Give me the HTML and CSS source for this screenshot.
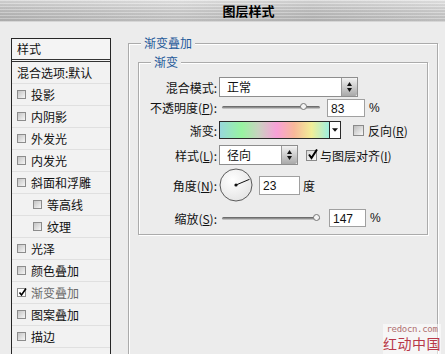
FILE: index.html
```html
<!DOCTYPE html>
<html lang="zh-CN">
<head>
    <meta charset="UTF-8">
    <title>图层样式</title>
    <link rel="stylesheet" href="styles.css">
</head>
<body>
    <!-- Title bar -->
    <div class="titlebar">图层样式</div>

    <div class="main">
        <!-- Style list -->
        <div class="style-list">
            <div class="list-head">样式</div>
            <div class="list-item">混合选项:默认</div>
            <div class="list-item"><span class="cb"></span>投影</div>
            <div class="list-item"><span class="cb"></span>内阴影</div>
            <div class="list-item"><span class="cb"></span>外发光</div>
            <div class="list-item"><span class="cb"></span>内发光</div>
            <div class="list-item"><span class="cb"></span>斜面和浮雕</div>
            <div class="list-item sub"><span class="cb"></span>等高线</div>
            <div class="list-item sub"><span class="cb"></span>纹理</div>
            <div class="list-item"><span class="cb"></span>光泽</div>
            <div class="list-item"><span class="cb"></span>颜色叠加</div>
            <div class="list-item active"><span class="cb checked"><svg viewBox="0 0 9 9"><path d="M1.5 4.5 L3.5 7 L8 0.5" fill="none" stroke="#000" stroke-width="1.6"/></svg></span>渐变叠加</div>
            <div class="list-item"><span class="cb"></span>图案叠加</div>
            <div class="list-item"><span class="cb"></span>描边</div>
            <div class="list-item"></div>
        </div>

        <!-- Gradient overlay settings -->
        <fieldset class="group outer">
            <legend>渐变叠加</legend>
            <fieldset class="group inner">
                <legend>渐变</legend>
                <div class="form-grid">
                    <label>混合模式:</label>
                    <div class="ctl">
                        <div class="select wide"><span class="sel-text">正常</span><span class="sel-btn"><svg viewBox="0 0 7 12"><path d="M3.5 1 L6 5 L1 5 Z M1 7 L6 7 L3.5 11 Z" fill="#111"/></svg></span></div>
                    </div>

                    <label>不透明度(<u>P</u>):</label>
                    <div class="ctl">
                        <div class="slider"><span class="thumb" style="left: 81px"></span></div>
                        <span class="num n1">83</span>
                        <span class="unit">%</span>
                    </div>

                    <label>渐变:</label>
                    <div class="ctl">
                        <div class="grad"><span class="grad-fill"></span><span class="grad-arrow"><svg viewBox="0 0 7 4"><path d="M0 0 L7 0 L3.5 4 Z" fill="#111"/></svg></span></div>
                        <span class="cb big"></span>
                        <span class="cb-label">反向(<u>R</u>)</span>
                    </div>

                    <label>样式(<u>L</u>):</label>
                    <div class="ctl">
                        <div class="select narrow"><span class="sel-text">径向</span><span class="sel-btn"><svg viewBox="0 0 7 12"><path d="M3.5 1 L6 5 L1 5 Z M1 7 L6 7 L3.5 11 Z" fill="#111"/></svg></span></div>
                        <span class="cb big checked2"><svg viewBox="0 0 11 11"><path d="M2 5.5 L4.5 9 L10 0.5" fill="none" stroke="#000" stroke-width="2"/></svg></span>
                        <span class="cb-label">与图层对齐(<u>I</u>)</span>
                    </div>

                    <label>角度(<u>N</u>):</label>
                    <div class="ctl">
                        <svg class="dial" viewBox="0 0 34 34">
                            <defs>
                                <radialGradient id="dialbg" cx="40%" cy="35%" r="70%">
                                    <stop offset="0" stop-color="#ffffff"/>
                                    <stop offset="1" stop-color="#e4e4e4"/>
                                </radialGradient>
                            </defs>
                            <circle cx="17" cy="17" r="16" fill="url(#dialbg)" stroke="#5a5a5a" stroke-width="1"/>
                            <line x1="17" y1="17" x2="30.5" y2="11.3" stroke="#111" stroke-width="1"/>
                            <circle cx="17" cy="17" r="1.6" fill="#111"/>
                        </svg>
                        <span class="num n2">23</span>
                        <span class="unit">度</span>
                    </div>

                    <label>缩放(<u>S</u>):</label>
                    <div class="ctl">
                        <div class="slider"><span class="thumb" style="left: 94px"></span></div>
                        <span class="num n3">147</span>
                        <span class="unit">%</span>
                    </div>
                </div>
            </fieldset>
        </fieldset>
    </div>

    <!-- Watermark -->
    <div class="watermark">
        <div class="wm-url">redocn.com</div>
        <div class="wm-name">红动中国</div>
    </div>
</body>
</html>
```

FILE: styles.css
```css
body {
    margin: 0;
    width: 445px;
    height: 354px;
    overflow: hidden;
    position: relative;
    background: #ececec;
    font-family: "Noto Sans CJK SC", "Liberation Sans", sans-serif;
    font-size: 12px;
    color: #111;
}

/* Title bar */
.titlebar {
    height: 22px;
    line-height: 22px;
    padding-left: 52px;
    text-align: center;
    font-size: 13px;
    font-weight: bold;
    color: #000;
    background:
        repeating-linear-gradient(180deg, rgba(255,255,255,0.25) 0 1px, rgba(0,0,0,0.04) 1px 3px),
        linear-gradient(90deg, rgba(0,0,0,0.06), rgba(255,255,255,0.1) 40%, rgba(0,0,0,0.05) 70%, rgba(255,255,255,0.1)),
        linear-gradient(180deg, #e4e4e4, #c8c8c8 55%, #bdbdbd);
    border-bottom: 1px solid #d6d6d6;
    box-sizing: border-box;
}

.main {
    display: flex;
    align-items: flex-start;
    padding: 13px 0 0 11px;
    height: 332px;
    box-sizing: border-box;
}

/* Left list */
.style-list {
    width: 100px;
    margin-top: 3px;
    border: 1px solid #262626;
    border-bottom: none;
    box-sizing: border-box;
    background: #f2f2f2;
}

.list-head {
    height: 20px;
    line-height: 20px;
    padding-left: 5px;
    border-bottom: 3px double #333;
    background: #f4f4f4;
}

.list-item {
    height: 21px;
    line-height: 21px;
    padding-left: 5px;
    border-bottom: 1px solid #e0e0e0;
    display: flex;
    align-items: center;
    white-space: nowrap;
}

.list-item.sub {
    padding-left: 21px;
}

.list-item.active {
    color: #6a6a6a;
}

.cb {
    display: inline-block;
    flex: none;
    width: 9px;
    height: 9px;
    margin-right: 5px;
    border: 1px solid #8c8c8c;
    box-sizing: border-box;
    background: linear-gradient(135deg, #c4c4c4, #f6f6f6);
    position: relative;
}

.cb svg {
    position: absolute;
    left: 0;
    top: -1px;
    width: 9px;
    height: 9px;
}

.cb.checked {
    background: #fff;
}

/* Fieldsets */
.group {
    margin: 0;
    border: 1px solid #ababab;
    box-shadow: inset 1px 1px 0 #fff, 1px 1px 0 #fff;
    box-sizing: border-box;
    min-width: 0;
}

.group legend {
    color: #1f5a9a;
    font-size: 12px;
    line-height: 16px;
    padding: 0 3px;
    background: #ececec;
}

.outer {
    width: 310px;
    height: 330px;
    margin-left: 17px;
    padding: 3px 9px 0 9px;
}

.outer > legend {
    margin-left: 3px;
}

.inner {
    width: 290px;
    padding: 7px 0 0 0;
}

.inner > legend {
    margin-left: 12px;
}

.form-grid {
    display: grid;
    grid-template-columns: 78px 1fr;
    grid-template-rows: 20px 21px 24px 26px 34px 32px;
    column-gap: 2px;
}

.form-grid label {
    text-align: right;
    align-self: center;
    white-space: nowrap;
}

.ctl {
    display: flex;
    align-items: center;
}

/* Select */
.select {
    height: 20px;
    display: flex;
    border: 1px solid #8e8e8e;
    box-sizing: border-box;
    background: #fff;
}

.select.wide {
    width: 139px;
}

.select.narrow {
    width: 79px;
}

.sel-text {
    flex: 1;
    padding-left: 7px;
    line-height: 18px;
}

.sel-btn {
    width: 15px;
    border-left: 1px solid #9a9a9a;
    background: linear-gradient(180deg, #f2f2f2, #c6c6c6 60%, #a9a9a9);
    display: flex;
    align-items: center;
    justify-content: center;
    border-radius: 0 2px 2px 0;
}

.sel-btn svg {
    width: 7px;
    height: 12px;
}

/* Slider */
.slider {
    position: relative;
    width: 98px;
    height: 3px;
    margin-left: 3px;
    border-radius: 2px;
    background: linear-gradient(180deg, #5c5c5c, #9a9a9a 60%, #dcdcdc);
}

.thumb {
    position: absolute;
    top: -3px;
    width: 7px;
    height: 7px;
    margin-left: -3px;
    border: 1px solid #777;
    border-radius: 50%;
    box-sizing: border-box;
    background: #f4f4f4;
}

/* Number fields */
.num {
    height: 18px;
    line-height: 18px;
    padding-left: 3px;
    border: 1px solid #a0a0a0;
    box-sizing: border-box;
    background: #fff;
    font-family: "Liberation Sans", sans-serif;
    font-size: 12px;
}

.n1 { width: 38px; margin-left: 7px; }
.n2 { width: 41px; height: 19px; margin-left: 6px; }
.n3 { width: 37px; margin-left: 9px; }

.unit {
    margin-left: 4px;
    font-family: "Liberation Sans", "Noto Sans CJK SC", sans-serif;
}

.n2 + .unit {
    margin-left: 3px;
    font-family: "Noto Sans CJK SC", sans-serif;
}

/* Gradient swatch */
.grad {
    width: 122px;
    height: 18px;
    display: flex;
    border: 1px solid #2a2a2a;
    box-sizing: border-box;
}

.grad-fill {
    flex: 1;
    background: linear-gradient(90deg, #98d8dc 0%, #98f4a0 20%, #c8d4c0 35%, #f8a0d8 52%, #f8b89a 68%, #f2ee98 84%, #a0f0e0 100%);
}

.grad-arrow {
    width: 10px;
    border-left: 1px solid #2a2a2a;
    background: #fff;
    display: flex;
    align-items: center;
    justify-content: center;
}

.grad-arrow svg {
    width: 6px;
    height: 4px;
}

.cb.big {
    width: 11px;
    height: 11px;
    margin: 0 4px 0 12px;
    border-color: #8a8a8a;
    background: linear-gradient(135deg, #bcbcbc, #f8f8f8);
}

.cb.checked2 {
    margin-left: 8px;
    margin-right: 3px;
    background: linear-gradient(135deg, #d8d8d8, #fafafa);
}

.cb.checked2 svg {
    width: 11px;
    height: 11px;
    top: -2px;
}

.cb-label {
    white-space: nowrap;
}

.dial {
    width: 34px;
    height: 34px;
}

/* Watermark overlay */
.watermark {
    position: absolute;
    right: 4px;
    bottom: 0;
    width: 58px;
    height: 30px;
    background: rgba(255, 255, 255, 0.55);
    text-align: center;
}

.wm-url {
    font-family: "DejaVu Sans Mono", monospace;
    font-size: 9px;
    line-height: 11px;
    letter-spacing: -0.3px;
    color: #b07070;
}

.wm-name {
    font-size: 14px;
    line-height: 17px;
    letter-spacing: 0.5px;
    color: #b83848;
}
```
